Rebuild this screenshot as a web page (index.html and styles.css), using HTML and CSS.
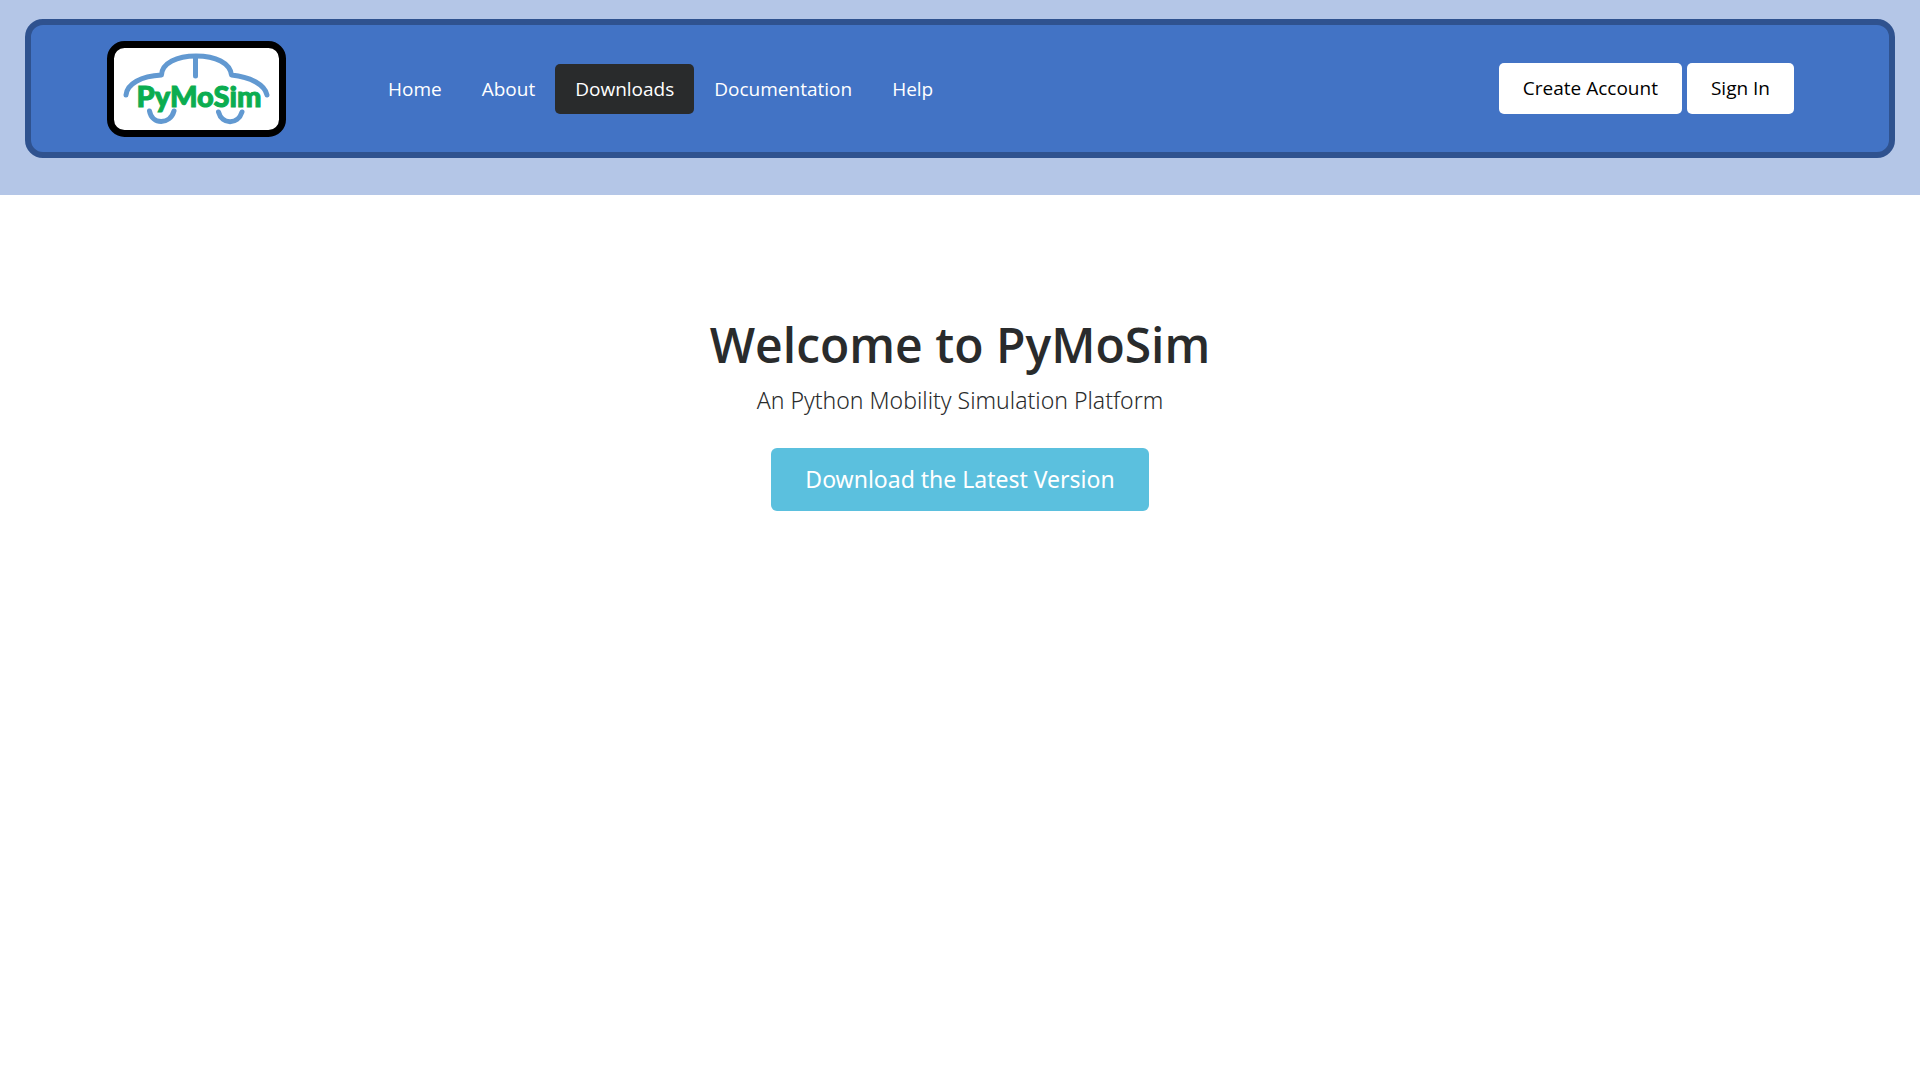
FILE: index.html
```html
<!DOCTYPE html>
<html lang="en">
<head>
<meta charset="utf-8">
<meta name="viewport" content="width=device-width, initial-scale=1">
<title>PyMoSim</title>
<link rel="stylesheet" href="styles.css">
</head>
<body>
<header class="site-header">
  <div class="navbar">
    <a class="brand" href="#" aria-label="PyMoSim home">
      <svg class="logo" viewBox="0 -1 179 97" width="179" height="97" aria-hidden="true">
        <rect x="3.500" y="3.500" width="172" height="89" rx="14" fill="#fff" stroke="#000" stroke-width="7"/>
        <g fill="none" stroke="#6299d1" stroke-width="5" stroke-linecap="round" stroke-linejoin="round">
          <path d="M19 54C20 43 34 35 54.500 34C55 22 70 15 89 15C109 15 123 22 124.500 34C144 36 158 44 160 54"/>
          <path d="M88.500 16V35"/>
          <path d="M42.500 70C45 84 63 84 67 70"/>
          <path d="M111.500 71C115 84 131 84 135 71"/>
        </g>
        <text class="logo-text" x="92" y="66" text-anchor="middle">PyMoSim</text>
      </svg>
    </a>
    <nav class="nav" aria-label="Main">
      <a class="nav-link" href="#">Home</a>
      <a class="nav-link" href="#">About</a>
      <a class="nav-link active" href="#" aria-current="page">Downloads</a>
      <a class="nav-link" href="#">Documentation</a>
      <a class="nav-link" href="#">Help</a>
    </nav>
    <div class="account">
      <button class="btn" type="button">Create Account</button>
      <button class="btn" type="button">Sign In</button>
    </div>
  </div>
</header>
<main class="hero">
  <h1 class="hero-title">Welcome to PyMoSim</h1>
  <p class="hero-lead">An Python Mobility Simulation Platform</p>
  <button class="btn-download" type="button">Download the Latest Version</button>
</main>
</body>
</html>
```
FILE: styles.css
```css
* { box-sizing: border-box; }

body {
  margin: 0;
  background: #fff;
  color: #292b2c;
  font-family: "Segoe UI", "Open Sans", sans-serif;
}

.site-header {
  padding: 19px 25px 37px;
  background: #b4c6e7;
}

.navbar {
  display: flex;
  align-items: center;
  padding: 15px 95px 15px 76px;
  border: 6px solid #2f528f;
  border-radius: 18px;
  background: #4273c5;
}

.brand { display: block; margin-right: 82px; }
.logo { display: block; }

.logo-text {
  fill: #0bad50;
  stroke: #0bad50;
  stroke-width: 1px;
  font-family: Lato, sans-serif;
  font-size: 29px;
  font-weight: 900;
}

.nav { display: flex; }

.nav-link {
  padding: 0 20px;
  border-radius: 5px;
  color: #fff;
  font-size: 19px;
  line-height: 50px;
  text-decoration: none;
}

.nav-link.active { background: #292b2c; }

.account {
  display: flex;
  gap: 5px;
  margin-left: auto;
}

.btn {
  padding: 0 24px;
  border: 0;
  border-radius: 5px;
  background: #fff;
  color: #000;
  font-family: inherit;
  font-size: 19px;
  line-height: 51px;
}

.hero {
  padding: 120px 25px;
  text-align: center;
}

.hero-title {
  margin: 0;
  font-size: 48px;
  font-weight: 600;
  line-height: 60px;
}

.hero-lead {
  margin: 8px 0 30px;
  font-family: "Segoe UI", "Noto Sans", sans-serif;
  font-size: 23px;
  font-weight: 300;
  line-height: 35px;
}

.btn-download {
  padding: 0 34px;
  border: 0;
  border-radius: 6px;
  background: #5bc0de;
  color: #fff;
  font-family: "Segoe UI", "Noto Sans", sans-serif;
  font-size: 23px;
  line-height: 63px;
}
```
